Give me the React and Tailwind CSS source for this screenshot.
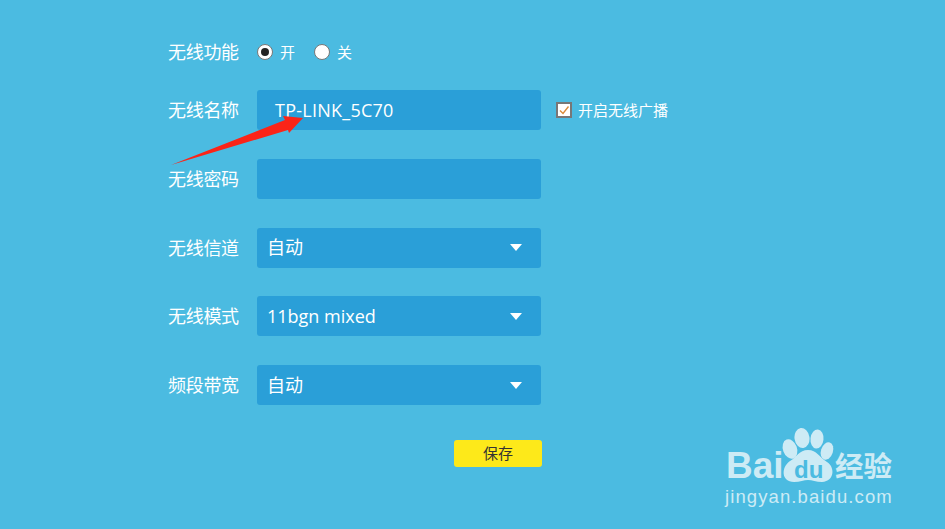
import React from "react";

const FONT = "font-['Open_Sans','Noto_Sans_CJK_SC',sans-serif]";

function Label({ children }) {
  return <div className="w-[89px] shrink-0 text-[18px] leading-[24px] tracking-[-0.3px] text-white">{children}</div>;
}

function Radio({ checked, label }) {
  return (
    <div className="flex items-center gap-[7px]">
      <span className="flex h-[16px] w-[16px] items-center justify-center rounded-full border border-[#777] bg-white">
        {checked && <span className="h-[8px] w-[8px] rounded-full bg-[#222]" />}
      </span>
      <span className="text-[15px] leading-[20px] text-white">{label}</span>
    </div>
  );
}

function Select({ value }) {
  return (
    <div className="flex h-[40px] w-[284px] items-center justify-between rounded-[3px] bg-[#2a9fd8] pl-[10px] pr-[19px] text-[18px] text-white">
      <span>{value}</span>
      <span className="h-0 w-0 border-x-[6px] border-t-[7px] border-x-transparent border-t-white" />
    </div>
  );
}

function Row({ label, children }) {
  return (
    <div className="flex h-[40px] items-center">
      <Label>{label}</Label>
      {children}
    </div>
  );
}

export default function App() {
  return (
    <div className={`${FONT} relative h-[529px] w-[945px] overflow-hidden bg-[#4bbbe1] pl-[168px] pt-[40px]`}>
      <div className="mb-[26px] flex h-[24px] items-center">
        <Label>无线功能</Label>
        <div className="flex items-center gap-[19px]">
          <Radio checked label="开" />
          <Radio label="关" />
        </div>
      </div>
      <div className="flex flex-col gap-[28.75px]">
        <Row label="无线名称">
          <div className="flex h-[40px] w-[284px] items-center rounded-[3px] bg-[#2a9fd8] pl-[18px] text-[18px] tracking-[0.25px] text-white">TP-LINK_5C70</div>
          <div className="ml-[15px] flex items-center gap-[6px]">
            <span className="flex h-[16px] w-[16px] items-center justify-center border-2 border-[#777] bg-white">
              <svg width="12" height="12" viewBox="0 0 12 12" fill="none">
                <path d="M2 6.5 L5 9.5 L10.5 2.5" stroke="#d98a3a" strokeWidth="1.4" />
              </svg>
            </span>
            <span className="text-[15px] leading-[20px] text-white">开启无线广播</span>
          </div>
        </Row>
        <Row label="无线密码">
          <div className="h-[40px] w-[284px] rounded-[3px] bg-[#2a9fd8]" />
        </Row>
        <Row label="无线信道"><Select value="自动" /></Row>
        <Row label="无线模式"><Select value="11bgn mixed" /></Row>
        <Row label="频段带宽"><Select value="自动" /></Row>
      </div>
      <div className="ml-[286px] mt-[35px] flex h-[27px] w-[88px] items-center justify-center rounded-[3px] bg-[#fde91a] text-[15px] text-[#333]">保存</div>

      <svg className="absolute left-[165px] top-[110px]" width="145" height="62" viewBox="165 110 145 62">
        <path d="M171 165 L285 120 L283 116 L303 118 L289 133 L288 130 Z" fill="#fb2418" />
      </svg>

      <div className="absolute left-[726px] top-[428px] h-[82px] w-[175px]">
        <svg className="absolute left-[54px] top-0" width="60" height="60" viewBox="0 0 60 60">
          <g fill="#cdebf5">
            <ellipse cx="10" cy="21" rx="7" ry="10" transform="rotate(-20 10 21)" />
            <ellipse cx="22" cy="10" rx="7.5" ry="10" transform="rotate(-8 22 10)" />
            <ellipse cx="37" cy="11" rx="6.5" ry="9.5" transform="rotate(6 37 11)" />
            <ellipse cx="47" cy="23" rx="6" ry="9" transform="rotate(18 47 23)" />
            <path d="M28 22 C19 22 17 29 10 33 C1 39 1 54 14 54 C20 54 24 52 28 52 C32 52 36 54 42 54 C55 53 55 39 47 34 C39 29 37 22 28 22 Z" />
          </g>
        </svg>
        <span className="absolute left-0 top-[15px] font-['Liberation_Sans',sans-serif] text-[37px] font-bold leading-[46px] text-[#cdebf5]">Bai</span>
        <span className="absolute left-[68px] top-[29px] font-['Liberation_Sans',sans-serif] text-[24px] font-bold leading-[26px] text-[#4bbbe1]">du</span>
        <span className="absolute left-[109px] top-[20px] text-[28.5px] font-bold leading-[36px] text-[#cdebf5]">经验</span>
        <span className="absolute left-[-1px] top-[56px] font-['Liberation_Sans',sans-serif] text-[18.5px] leading-[26px] tracking-[1.1px] text-[#cdebf5]">jingyan.baidu.com</span>
      </div>
    </div>
  );
}
